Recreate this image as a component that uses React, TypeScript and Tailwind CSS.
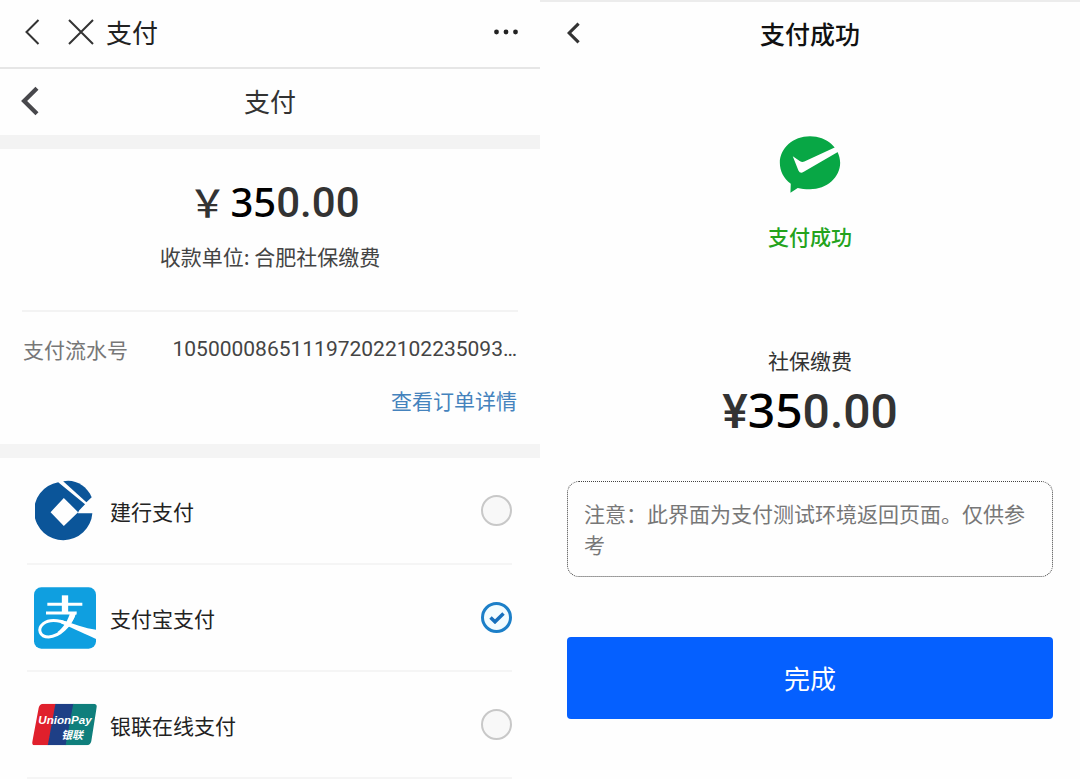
import { useState } from "react";
import type { ReactNode } from "react";

function ChevronLeft({ className, weight }: { className: string; weight: number }) {
  return (
    <svg viewBox="0 0 16 28" className={className} fill="none" stroke="currentColor" strokeWidth={weight} aria-hidden="true">
      <path d="M14.500 2 2.500 14l12 12" />
    </svg>
  );
}

function CloseIcon() {
  return (
    <svg viewBox="0 0 26 26" className="size-[26px]" fill="none" stroke="currentColor" strokeWidth="2" aria-hidden="true">
      <path d="M1 1l24 24M25 1 1 25" />
    </svg>
  );
}

function MoreIcon() {
  return (
    <svg viewBox="0 0 26 6" className="h-[6px] w-[26px]" fill="currentColor" aria-hidden="true">
      <circle cx="3.500" cy="3" r="2.400" />
      <circle cx="13" cy="3" r="2.400" />
      <circle cx="22.500" cy="3" r="2.400" />
    </svg>
  );
}

function CcbLogo() {
  return (
    <svg viewBox="48 34 176 184" className="h-[61px] w-[59px]" fill="#0b5599" aria-hidden="true">
      <path
        fillRule="evenodd"
        d="M117 41A88 88 0 1 0 220 134H176L180 126 198 107ZM134 88 94 131l40 42 43-42Z"
      />
      <path d="M132 38C166 30 203 50 218 86L202 101Z" />
    </svg>
  );
}

function AlipayLogo() {
  return (
    <svg viewBox="42 21 186 184" className="size-[62px]" aria-hidden="true">
      <rect x="42" y="21" width="186" height="184" rx="22" fill="#0f9fe0" />
      <g fill="none" stroke="#fff">
        <path d="M82 72H187" strokeWidth="9" />
        <path d="M135 45V98" strokeWidth="19" />
        <path d="M78 98H170" strokeWidth="9" />
        <path d="M163 97C153 135 118 169 86 170 60 170 50 146 70 130 88 116 120 120 150 133" strokeWidth="9" />
      </g>
      <path d="M169 94C164 118 146 142 126 156L112 156C132 140 144 120 150 98Z" fill="#fff" />
      <path d="M122 118C160 130 195 144 228 148V176C200 164 165 146 122 129Z" fill="#fff" />
    </svg>
  );
}

function UnionPayLogo() {
  return (
    <svg viewBox="34 40 202 130" className="h-[43px] w-[67px]" aria-hidden="true">
      <clipPath id="unionpay-card">
        <path d="M72 42H222Q235 42 232 54L216 156Q213 168 202 168H46Q35 168 38 156L57 54Q60 42 72 42Z" />
      </clipPath>
      <g clipPath="url(#unionpay-card)">
        <path d="M34 40H110L86 170H34Z" fill="#e0202c" />
        <path d="M108 40H164L140 170H84Z" fill="#1e3f86" />
        <path d="M162 40H236V170H138Z" fill="#0f7f7c" />
      </g>
      <text x="56" y="102" fill="#fff" fontSize="35" fontWeight="700" fontStyle="italic" fontFamily="'Liberation Sans', sans-serif">
        UnionPay
      </text>
      <text x="125" y="150" fill="#fff" fontSize="33" fontWeight="700" fontStyle="italic" fontFamily="'Noto Sans CJK SC', sans-serif">
        银联
      </text>
    </svg>
  );
}

function SuccessIcon() {
  return (
    <svg viewBox="118 46 186 172" className="h-[57px] w-[62px]" aria-hidden="true">
      <path
        d="M211 47C262 47 302 83 302 127S262 207 211 207C196 207 184 205 174 203L152 217 153 190C132 175 120 152 120 127 120 83 160 47 211 47Z"
        fill="#08a745"
      />
      <path d="M159 107 181 122Q187 126 194 123L287 80 304 89 191 155Q181 160 176 150Z" fill="#fff" />
    </svg>
  );
}

type Method = { id: string; name: string; logo: ReactNode };

const methods: Method[] = [
  { id: "ccb", name: "建行支付", logo: <CcbLogo /> },
  { id: "alipay", name: "支付宝支付", logo: <AlipayLogo /> },
  { id: "unionpay", name: "银联在线支付", logo: <UnionPayLogo /> },
];

function PaymentPanel() {
  const [selected, setSelected] = useState("alipay");
  return (
    <section className="min-w-0">
      <header className="flex items-center border-b-2 border-[#e6e6e6] pt-[14px] pr-[21px] pb-[18px] pl-6 text-[#333]">
        <button type="button" aria-label="返回">
          <ChevronLeft className="h-7 w-4" weight={2} />
        </button>
        <button type="button" aria-label="关闭" className="ml-7">
          <CloseIcon />
        </button>
        <h1 className="ml-3 text-[26px] leading-[35px] text-[#222]">支付</h1>
        <button type="button" aria-label="更多" className="ml-auto text-[#222]">
          <MoreIcon />
        </button>
      </header>

      <div className="grid grid-cols-[1fr_auto_1fr] items-center px-5 pt-4 pb-[18px]">
        <button type="button" aria-label="返回上一页" className="justify-self-start text-[#48484c]">
          <ChevronLeft className="h-[30px] w-[20px]" weight={4} />
        </button>
        <h2 className="text-[26px] leading-8 text-[#333]">支付</h2>
      </div>
      <div className="h-[14px] bg-[#f3f3f3]" />

      <div className="mx-[22px] border-b-2 border-[#f3f3f3] pt-6 pb-10 text-center">
        <p className="pl-2 font-['Roboto',sans-serif] text-[42px] leading-[56px] font-medium text-[#333]">
          <span className="mr-1 font-['Noto_Sans_CJK_SC',sans-serif] text-[38px]">￥</span>
          <span className="font-['Noto_Sans',sans-serif] text-[40px] text-black">35</span>0.00
        </p>
        <p className="mt-[11px] text-[21px] leading-7 text-[#444]">收款单位: 合肥社保缴费</p>
      </div>

      <div className="px-[23px] pt-[23px] pb-[30px] text-[21px] leading-7">
        <div className="flex justify-between">
          <span className="shrink-0 text-[#777]">支付流水号</span>
          <span className="font-['Roboto',sans-serif] text-[#444]">1050000865111972022102235093…</span>
        </div>
        <div className="mt-[23px] text-right">
          <a href="#order" className="text-[#4583bd]">查看订单详情</a>
        </div>
      </div>
      <div className="h-[14px] bg-[#f4f4f4]" />

      <fieldset aria-label="支付" className="pr-7 pl-[27px]">
        {methods.map((m) => (
          <label key={m.id} className="flex h-[107px] cursor-pointer items-center border-b-2 border-[#f5f5f5]">
            <span className="flex w-[75px] justify-center">{m.logo}</span>
            <span className="ml-2 text-[21px] leading-7 text-[#222]">{m.name}</span>
            <span className="ml-auto grid place-items-center">
              <input
                type="radio"
                name="method"
                checked={selected === m.id}
                onChange={() => setSelected(m.id)}
                className="col-start-1 row-start-1 size-[31px] appearance-none rounded-full border-2 border-[#c8c8c8] bg-[#f8f8f8] checked:border-3 checked:border-[#1c7fc8] checked:bg-[#f2fcff]"
              />
              {selected === m.id && (
                <svg viewBox="0 0 16 12" className="pointer-events-none col-start-1 row-start-1 h-3 w-4" fill="none" stroke="#1670bd" strokeWidth="3.500" aria-hidden="true">
                  <path d="M1.500 5.500 6 9.800 14.500 1.500" />
                </svg>
              )}
            </span>
          </label>
        ))}
      </fieldset>
    </section>
  );
}

function ResultPanel() {
  return (
    <section className="min-w-0 border-t-2 border-[#ececec] px-[27px]">
      <header className="grid grid-cols-[1fr_auto_1fr] items-center pt-[15px] pb-4">
        <button type="button" aria-label="返回" className="justify-self-start text-[#333]">
          <ChevronLeft className="h-[22px] w-[13px]" weight={4} />
        </button>
        <h1 className="text-[25px] leading-8 font-medium text-[#111]">支付成功</h1>
      </header>

      <div className="flex flex-col items-center pt-[71px]">
        <SuccessIcon />
        <p className="mt-[29px] text-[21px] leading-7 font-medium text-[#24a31c]">支付成功</p>
        <p className="mt-24 text-[21px] leading-7 text-[#333]">社保缴费</p>
        <p className="mt-1 font-['Roboto',sans-serif] text-[48px] leading-[64px] font-medium text-[#333]">
          ¥<span className="font-['Noto_Sans',sans-serif] text-[48px] text-black">35</span>0.00
        </p>
      </div>

      <p className="mt-[37px] rounded-xl border border-dotted border-[#444] p-4 text-[21px] leading-[31px] text-[#777]">
        注意：此界面为支付测试环境返回页面。仅供参考
      </p>

      <button type="button" className="mt-[60px] w-full rounded-sm bg-[#0560ff] py-6 text-[26px] leading-[34px] text-white">
        完成
      </button>
    </section>
  );
}

export default function App() {
  return (
    <main className="grid min-h-screen grid-cols-2 bg-[#fefefe] font-['Noto_Sans_CJK_SC',sans-serif]">
      <PaymentPanel />
      <ResultPanel />
    </main>
  );
}
